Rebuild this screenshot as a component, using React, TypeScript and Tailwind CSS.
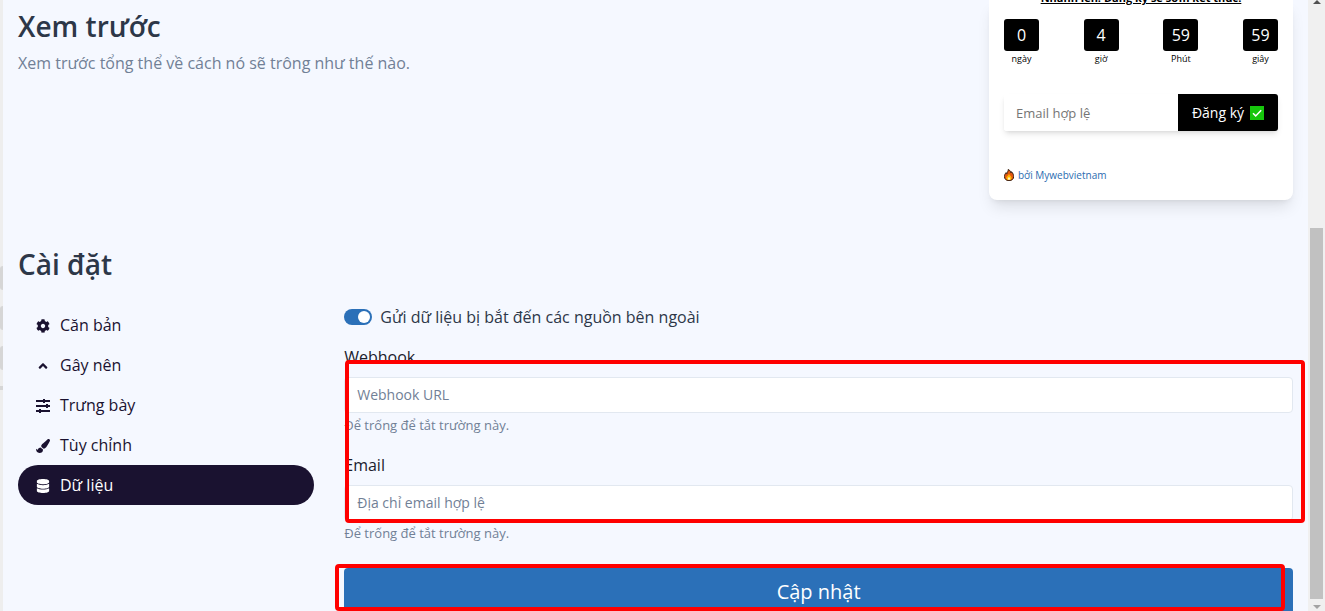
import React, { useState } from "react";
import { FaAngleUp, FaCog, FaDatabase, FaPaintBrush } from "react-icons/fa";

type NavItem = {
  id: string;
  label: string;
  icon: React.ReactNode;
};

const SlidersIcon = () => (
  <svg viewBox="0 0 16 16" className="w-4 h-4" fill="currentColor">
    <path d="M1 2h14v2H1zM1 7h14v2H1zM1 12h14v2H1z" />
    <path d="M8 1h2v4H8zM11 6h2v4h-2zM4 11h2v4H4z" />
  </svg>
);

const FireIcon = () => (
  <svg viewBox="0 0 12 14" className="w-2.5 h-3">
    <path
      d="M5 0.4C8 1.6 8 3.6 8.2 4.6 8.8 4.2 9 3.4 9 3c2 2 2.6 4.2 2.6 6 0 3-2.4 4.8-5.6 4.8S.5 12 .5 8.8C.5 6.6 1.6 5.4 2.4 4.2c.2.8.5 1.2 1 1.5C3.300 3.600 5.500 2.800 5 .4z"
      fill="#e2570f"
      stroke="#2b1608"
      strokeWidth="1.1"
    />
    <path
      d="M6 5.600c.4 1.700 3.200 2.800 3.200 5 0 1.600-1.400 2.500-3.200 2.500s-3.300-.9-3.300-2.500C2.700 8.600 5.400 7.800 6 5.600z"
      fill="#ffb703"
    />
    <path d="M6 9.200c.3.900 1.500 1.400 1.500 2.400 0 .8-.7 1.200-1.500 1.200s-1.500-.4-1.500-1.200c0-1 1.200-1.500 1.500-2.400z" fill="#fff1b8" />
  </svg>
);

const CheckIcon = () => (
  <svg viewBox="0 0 14 14" className="w-3.5 h-3.5">
    <rect width="14" height="14" fill="#16c60c" />
    <path d="M3 7.200l2.700 2.700L11.200 4.200" fill="none" stroke="#fff" strokeWidth="1.5" />
  </svg>
);

const navItems: NavItem[] = [
  { id: "basic", label: "Căn bản", icon: <FaCog className="w-3.5 h-3.5" /> },
  { id: "trigger", label: "Gây nên", icon: <FaAngleUp className="w-3.5 h-3.5" /> },
  { id: "display", label: "Trưng bày", icon: <SlidersIcon /> },
  { id: "custom", label: "Tùy chỉnh", icon: <FaPaintBrush className="w-3.5 h-3.5" /> },
  { id: "data", label: "Dữ liệu", icon: <FaDatabase className="w-3.5 h-3.5" /> },
];

const countdown = [
  { value: 0, label: "ngày" },
  { value: 4, label: "giờ" },
  { value: 59, label: "Phút" },
  { value: 59, label: "giây" },
];

const PreviewCard = () => (
  <div className="bg-white rounded-b-lg shadow-lg px-[15px] pb-[17px] text-black">
    {/* Title is scrolled past the top edge */}
    <div className="h-1.5 flex items-end justify-center overflow-hidden">
      <p className="text-[11px] leading-4 font-bold underline whitespace-nowrap">
        Nhanh lên! Đăng ký sẽ sớm kết thúc!
      </p>
    </div>

    <div className="flex justify-between mt-[13px]">
      {countdown.map((item, index) => (
        <div key={index} className="w-[35px] flex flex-col items-center">
          <span className="w-full h-8 rounded-[3px] bg-black text-white text-base flex items-center justify-center">
            {item.value}
          </span>
          <span className="text-[9px] leading-4">{item.label}</span>
        </div>
      ))}
    </div>

    <form className="flex mt-[27px] rounded-[3px] shadow-md" onSubmit={(e) => e.preventDefault()}>
      <input
        type="email"
        aria-label="Email hợp lệ"
        placeholder="Email hợp lệ"
        className="flex-1 min-w-0 h-[37px] px-3 text-[13px] rounded-l-[3px] bg-white placeholder:text-[#757575] focus:outline-none"
      />
      <button
        type="submit"
        className="w-[100px] h-[37px] bg-black text-white text-sm rounded-r-[3px] flex items-center justify-center gap-1.5"
      >
        Đăng ký
        <CheckIcon />
      </button>
    </form>

    <a href="#" className="flex items-center gap-1 mt-9 text-[10px] leading-4 text-[#2b6cb0]">
      <FireIcon />
      bởi Mywebvietnam
    </a>
  </div>
);

type FieldProps = {
  id: string;
  label: string;
  type: string;
  placeholder: string;
};

const Field = ({ id, label, type, placeholder }: FieldProps) => (
  <div className="mt-4">
    <label htmlFor={id} className="block leading-6 text-[#1a202c]">
      {label}
    </label>
    <input
      id={id}
      type={type}
      placeholder={placeholder}
      className="block w-full h-9 mt-2 px-3 pb-0.5 text-sm bg-white border border-[#e2e8f0] rounded placeholder:text-[#718096] focus:outline-none"
    />
    <p className="mt-0.5 mb-[18px] text-[13px] leading-5 text-[#718096]">Để trống để tắt trường này.</p>
  </div>
);

const PageScrollbar = () => (
  <div className="w-[17px] shrink-0 bg-[#f0f0f0] flex flex-col items-center">
    <svg viewBox="0 0 8 4" className="w-2 h-1" fill="#505050">
      <path d="M4 0l4 4H0z" />
    </svg>
    <div className="w-[13px] grow mt-56 bg-[#c1c1c1]" />
    <svg viewBox="0 0 8 12" className="w-2 h-3" fill="#a3a3a3">
      <path d="M0 6h8L4 10z" />
    </svg>
  </div>
);

export default function App() {
  const [active, setActive] = useState("data");
  const [enabled, setEnabled] = useState(true);

  return (
    <div className="h-screen flex overflow-hidden bg-[#f5f8ff] text-base font-['Open_Sans','Noto_Sans',sans-serif]">
      {/* Edge of the collapsed admin menu */}
      <div className="w-[3px] shrink-0 bg-[#eeeeee] pt-[266px] flex flex-col gap-4">
        <span className="h-6 rounded-l-full bg-[#d6d6d6]" />
        <span className="h-6 rounded-l-full bg-[#d6d6d6]" />
        <span className="h-6 rounded-l-full bg-[#d6d6d6]" />
        <span className="h-1 bg-[#d6d6d6]" />
      </div>

      <main className="flex-1 min-w-0 px-[15px]">
        <section className="flex justify-between items-start">
          <div className="pt-[5px]">
            <h2 className="text-[28px] leading-[42px] font-semibold text-[#2d3748]">Xem trước</h2>
            <p className="mt-1 leading-6 text-[#718096]">
              Xem trước tổng thể về cách nó sẽ trông như thế nào.
            </p>
          </div>
          <div className="w-[304px]">
            <PreviewCard />
          </div>
        </section>

        <section className="mt-[43px]">
          <h2 className="text-[28px] leading-[42px] font-semibold text-[#2d3748]">Cài đặt</h2>

          <div className="grid grid-cols-4 gap-x-[30px] mt-5">
            <nav className="flex flex-col">
              {navItems.map((item) => (
                <button
                  key={item.id}
                  type="button"
                  onClick={() => setActive(item.id)}
                  className={`h-10 px-4 flex items-center gap-2 rounded-full text-left ${
                    active === item.id ? "bg-[#1a1230] text-white font-medium" : "text-[#1a1230]"
                  }`}
                >
                  <span className="w-[18px] flex justify-center pt-0.5">{item.icon}</span>
                  {item.label}
                </button>
              ))}
            </nav>

            <form className="relative col-span-3" onSubmit={(e) => e.preventDefault()}>
              <label className="flex items-center gap-2 leading-6 text-[#2d3748]">
                <input
                  type="checkbox"
                  role="switch"
                  checked={enabled}
                  onChange={(e) => setEnabled(e.target.checked)}
                  className="appearance-none w-7 h-4 p-0.5 rounded-full bg-[#cbd5e0] checked:bg-[#2b70b8] flex justify-start checked:justify-end before:content-[''] before:w-3 before:h-3 before:rounded-full before:bg-white"
                />
                Gửi dữ liệu bị bắt đến các nguồn bên ngoài
              </label>

              <Field id="webhook" label="Webhook" type="url" placeholder="Webhook URL" />
              <Field id="email" label="Email" type="email" placeholder="Địa chỉ email hợp lệ" />

              <button type="submit" className="w-full h-12 mt-[7px] rounded bg-[#2b70b8] text-white text-xl">
                Cập nhật
              </button>

              {/* Highlight frames */}
              <div className="absolute left-px -right-3 top-[55px] h-[163px] border-4 border-[#ff0000] rounded pointer-events-none" />
              <div className="absolute -left-[9px] right-2 top-[259px] h-[47px] border-4 border-[#ff0000] rounded-sm pointer-events-none" />
            </form>
          </div>
        </section>
      </main>

      <PageScrollbar />
    </div>
  );
}
